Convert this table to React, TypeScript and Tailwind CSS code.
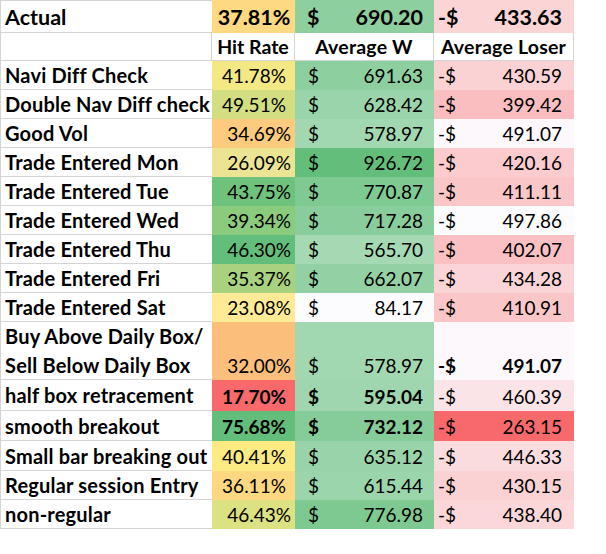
import React from 'react';

type RowData = {
  label: React.ReactNode;
  h: string;
  hit: string;
  hitBg: string;
  center?: boolean;
  hitBold?: boolean;
  w: string;
  wBg: string;
  wBold?: boolean;
  l: string;
  lBg: string;
  lBold?: boolean;
};

const rows: RowData[] = [
  { label: 'Navi Diff Check', h: 'h-[29px]', hit: '41.78%', hitBg: 'bg-[#f4e884]', center: true, w: '691.63', wBg: 'bg-[#8ecfa0]', l: '430.59', lBg: 'bg-[#fbd2d4]' },
  { label: 'Double Nav Diff check', h: 'h-[29px]', hit: '49.51%', hitBg: 'bg-[#d2de81]', center: true, w: '628.42', wBg: 'bg-[#99d4aa]', l: '399.42', lBg: 'bg-[#fabec1]' },
  { label: 'Good Vol', h: 'h-[29px]', hit: '34.69%', hitBg: 'bg-[#fdcb7e]', w: '578.97', wBg: 'bg-[#a2d8b1]', l: '491.07', lBg: 'bg-[#fcf8fb]' },
  { label: 'Trade Entered Mon', h: 'h-[29px]', hit: '26.09%', hitBg: 'bg-[#ebe593]', w: '926.72', wBg: 'bg-[#63be7b]', l: '420.16', lBg: 'bg-[#fbcbce]' },
  { label: 'Trade Entered Tue', h: 'h-[29px]', hit: '43.75%', hitBg: 'bg-[#6ec27c]', w: '770.87', wBg: 'bg-[#7fc993]', l: '411.11', lBg: 'bg-[#fbc6c8]' },
  { label: 'Trade Entered Wed', h: 'h-[29px]', hit: '39.34%', hitBg: 'bg-[#8bcb7e]', w: '717.28', wBg: 'bg-[#89cd9c]', l: '497.86', lBg: 'bg-[#fcfcff]' },
  { label: 'Trade Entered Thu', h: 'h-[29px]', hit: '46.30%', hitBg: 'bg-[#63be7b]', w: '565.70', wBg: 'bg-[#a5d9b4]', l: '402.07', lBg: 'bg-[#fac0c3]' },
  { label: 'Trade Entered Fri', h: 'h-[29px]', hit: '35.37%', hitBg: 'bg-[#a8d27f]', w: '662.07', wBg: 'bg-[#93d1a4]', l: '434.28', lBg: 'bg-[#fbd4d7]' },
  { label: 'Trade Entered Sat', h: 'h-[29px]', hit: '23.08%', hitBg: 'bg-[#ffeb96]', w: '84.17', wBg: 'bg-[#fcfcff]', l: '410.91', lBg: 'bg-[#fbc6c8]' },
  {
    label: (
      <>
        Buy Above Daily Box/
        <br />
        Sell Below Daily Box
      </>
    ),
    h: 'h-[58px]', hit: '32.00%', hitBg: 'bg-[#fcbf7b]', w: '578.97', wBg: 'bg-[#a2d8b1]', l: '491.07', lBg: 'bg-[#fcf8fb]', lBold: true,
  },
  { label: 'half box retracement', h: 'h-[31px]', hit: '17.70%', hitBg: 'bg-[#f8696b]', center: true, hitBold: true, w: '595.04', wBg: 'bg-[#9fd6af]', wBold: true, l: '460.39', lBg: 'bg-[#fbe4e7]' },
  { label: 'smooth breakout', h: 'h-[30px]', hit: '75.68%', hitBg: 'bg-[#63be7b]', center: true, hitBold: true, w: '732.12', wBg: 'bg-[#86cc99]', wBold: true, l: '263.15', lBg: 'bg-[#f8696b]' },
  { label: 'Small bar breaking out', h: 'h-[30px]', hit: '40.41%', hitBg: 'bg-[#fcea83]', center: true, w: '635.12', wBg: 'bg-[#98d3a9]', l: '446.33', lBg: 'bg-[#fbdcde]' },
  { label: 'Regular session Entry', h: 'h-[29px]', hit: '36.11%', hitBg: 'bg-[#fed880]', center: true, w: '615.44', wBg: 'bg-[#9bd5ac]', l: '430.15', lBg: 'bg-[#fbd2d4]' },
  { label: 'non-regular', h: 'h-[29px]', hit: '46.43%', hitBg: 'bg-[#dce182]', w: '776.98', wBg: 'bg-[#7ec992]', l: '438.40', lBg: 'bg-[#fbd7da]' },
];

const line = 'border-[#d4d4d4]';

const DataRow = ({ r }: { r: RowData }) => (
  <>
    <div className={`${r.h} flex items-center border-l border-b ${line} pl-[4px] pt-[1px] font-bold text-[20px] tracking-[0.2px] leading-[29px] whitespace-nowrap`}>
      <span>{r.label}</span>
    </div>
    <div className={`${r.h} ${r.hitBg} flex items-end`}>
      <div className={`h-[29px] w-full flex items-center pt-[1px] ${r.center ? 'justify-center pl-[1px]' : 'justify-end pr-[4px]'} ${r.hitBold ? 'font-bold' : ''}`}>
        {r.hit}
      </div>
    </div>
    <div className={`${r.h} ${r.wBg} flex items-end`}>
      <div className={`h-[29px] w-full flex items-center justify-between pt-[1px] pl-[13px] pr-[11px] ${r.wBold ? 'font-bold' : ''}`}>
        <span>$</span>
        <span>{r.w}</span>
      </div>
    </div>
    <div className={`${r.h} ${r.lBg} flex items-end`}>
      <div className={`h-[29px] w-full flex items-center justify-between pt-[1px] pl-[4px] pr-[12px] ${r.lBold ? 'font-bold' : ''}`}>
        <span>-$</span>
        <span>{r.l}</span>
      </div>
    </div>
  </>
);

export default function App() {
  return (
    <div className="w-[606px] h-[554px] bg-white text-black font-[Lato,sans-serif] text-[19px] overflow-hidden">
      <div className="grid grid-cols-[212px_83px_139px_140px] w-[574px]">
        {/* Actual */}
        <div className={`h-[33px] flex items-center border-l border-b border-t ${line} pl-[4px] pt-[1px] font-bold text-[21.5px]`}>
          Actual
        </div>
        <div className="h-[33px] bg-[#fdd981] flex items-center justify-center pl-[1px] pt-[1px] font-bold text-[21.5px]">
          37.81%
        </div>
        <div className="h-[33px] bg-[#8ecfa0] flex items-center justify-between pl-[12px] pr-[11px] pt-[1px] font-bold text-[21.5px]">
          <span>$</span>
          <span>690.20</span>
        </div>
        <div className="h-[33px] bg-[#fbd4d6] flex items-center justify-between pl-[4px] pr-[12px] pt-[1px] font-bold text-[21.5px]">
          <span>-$</span>
          <span>433.63</span>
        </div>

        {/* header */}
        <div className={`h-[28px] border-l border-b border-r ${line}`} />
        <div className={`h-[28px] border-b border-r ${line} flex items-center justify-center font-bold text-[19.5px]`}>Hit Rate</div>
        <div className={`h-[28px] border-b border-r ${line} flex items-center justify-center font-bold text-[19.5px] tracking-[0.2px]`}>Average W</div>
        <div className={`h-[28px] border-b border-r ${line} flex items-center justify-center font-bold text-[19.5px] tracking-[0.2px]`}>Average Loser</div>

        {rows.map((r, i) => (
          <DataRow key={i} r={r} />
        ))}
      </div>
    </div>
  );
}
